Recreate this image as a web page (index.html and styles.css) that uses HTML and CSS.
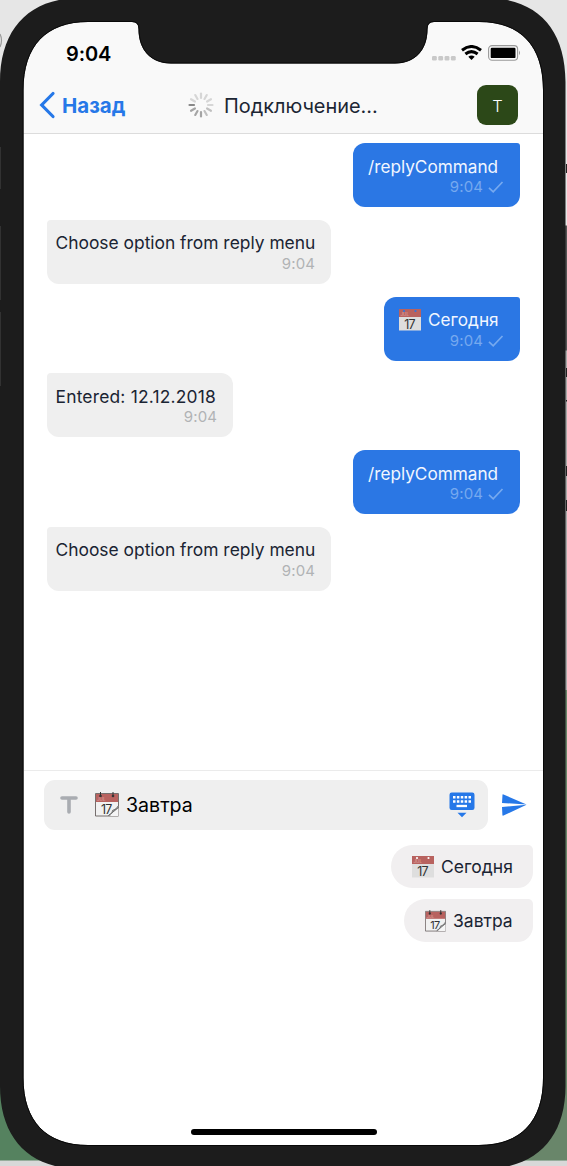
FILE: index.html
```html
<!DOCTYPE html>
<html lang="ru">
<head>
<meta charset="utf-8">
<title>Чат</title>
<link rel="stylesheet" href="styles.css">
</head>
<body>
<div class="screen">
  <div class="top">
    <div class="status">
      <span class="clock">9:04</span>
      <span class="indicators">
        <svg width="24" height="5" viewBox="0 0 24 5" fill="#c9c9c9"><rect width="4.800" height="4.500" rx="1.200"/><rect x="6.300" width="4.800" height="4.500" rx="1.200"/><rect x="12.600" width="4.800" height="4.500" rx="1.200"/><rect x="18.900" width="4.800" height="4.500" rx="1.200"/></svg>
        <svg class="wifi" width="21" height="15" viewBox="0 0 21 15" fill="none" stroke="#000" stroke-width="3"><path d="M1 5.200Q10.500-2.200 20 5.200M4.400 9Q10.500 4.200 16.600 9"/><path d="M7.300 11.800q3.200-2.500 6.400 0L10.500 15z" fill="#000" stroke="none"/></svg>
        <svg width="33" height="16" viewBox="0 0 33 16"><rect x=".6" y=".6" width="29" height="14.600" rx="3.500" fill="none" stroke="#999" stroke-width="1.100"/><rect x="2.700" y="2.700" width="24.800" height="10.400" rx="1.200"/><path d="M31 5.500q2 2.300 0 4.800z" fill="#999"/></svg>
      </span>
    </div>
    <div class="nav">
      <a class="back"><svg width="17" height="28" viewBox="0 0 17 28"><path d="M14 2.500L2.700 14L14 25.500" fill="none" stroke="#2678e8" stroke-width="3.200" stroke-linecap="round" stroke-linejoin="miter"/></svg><span>Назад</span></a>
      <div class="title">
        <svg width="26" height="26" viewBox="-13 -13 26 26" stroke-width="2.200" stroke-linecap="round">
          <g stroke="#d6d6d6"><path d="M0-7v-4.500"/><path d="M0-7v-4.500" transform="rotate(30)"/><path d="M0-7v-4.500" transform="rotate(60)"/><path d="M0-7v-4.500" transform="rotate(90)"/><path d="M0-7v-4.500" transform="rotate(300)"/><path d="M0-7v-4.500" transform="rotate(330)"/></g>
          <g stroke="#c0c0c0"><path d="M0-7v-4.500" transform="rotate(120)"/><path d="M0-7v-4.500" transform="rotate(150)"/></g>
          <g stroke="#a5a5a5"><path d="M0-7v-4.500" transform="rotate(180)"/><path d="M0-7v-4.500" transform="rotate(210)"/><path d="M0-7v-4.500" transform="rotate(240)"/></g>
          <path d="M0-7v-4.500" transform="rotate(270)" stroke="#888"/>
        </svg>
        <span>Подключение...</span>
      </div>
      <div class="avatar">T</div>
    </div>
  </div>

  <div class="chat">
    <div class="msg out"><p>/replyCommand</p><small>9:04<svg width="16" height="12" viewBox="0 0 16 12"><path class="check" d="M1 6.800L5.200 10.800L14.500 1"/></svg></small></div>
    <div class="msg in"><p>Choose option from reply menu</p><small>9:04</small></div>
    <div class="msg out today"><p><svg class="cal" width="22" height="22" viewBox="0 0 22 22">
      <path fill="#dedede" d="M0 7h22v14.500H0z"/><path fill="#b8625f" d="M0 0h22v8H0z"/>
      <circle cx="5" cy="2" r="1.100" fill="currentColor"/><circle cx="16.500" cy="2" r="1.100" fill="currentColor"/>
      <text x="1.500" y="6.800" font-size="4.500" fill="#e0aaa7">JUL</text>
      <text class="day" x="10.600" y="19.500" font-size="12.500">17</text>
    </svg><span>Сегодня</span></p><small>9:04<svg width="16" height="12" viewBox="0 0 16 12"><path class="check" d="M1 6.800L5.200 10.800L14.500 1"/></svg></small></div>
    <div class="msg in entered"><p>Entered: 12.12.2018</p><small>9:04</small></div>
    <div class="msg out"><p>/replyCommand</p><small>9:04<svg width="16" height="12" viewBox="0 0 16 12"><path class="check" d="M1 6.800L5.200 10.800L14.500 1"/></svg></small></div>
    <div class="msg in"><p>Choose option from reply menu</p><small>9:04</small></div>
  </div>

  <div class="composer">
    <div class="field">
      <svg width="18" height="20" viewBox="0 0 18 20"><path d="M2 3h14M9 3v14" stroke="#a9acb1" stroke-width="3.600" stroke-linecap="round"/></svg>
      <svg class="draft-icon" width="24" height="25" viewBox="0 0 24 25">
        <path fill="#f1f1f1" stroke="#68605f" stroke-width=".9" d="M.5 1.500h23V24H.5z"/><path fill="#b8625f" d="M1 2h22v8H1z"/>
        <path d="M5.500 0v4M18 0v4" stroke="#333" stroke-width="1"/><circle cx="5.500" cy="4" r="1.300" fill="#333"/><circle cx="18" cy="4" r="1.300" fill="#333"/>
        <text x="2" y="9" font-size="4.500" fill="#e0aaa7">JUL</text>
        <text class="day" x="11.300" y="21.500" font-size="12.500">17</text>
        <path fill="#f5f5f5" d="M15 24l8.500-8v8z"/><path fill="#aaa" d="M23.500 13q-2 4.500-6 5 .5 3-3.500 5.500l9.500-7.500z"/><path d="M23.500 13.500q-2 4-6 5 .5 3-4 5l10-8" fill="none" stroke="#555" stroke-width=".7"/>
      </svg>
      <span class="draft">Завтра</span>
      <svg class="keyboard" width="26" height="26" viewBox="0 0 26 26"><rect x=".5" y=".5" width="25" height="17.500" rx="2.200" fill="#2678e8"/><path d="M4 5.200h18M4 9.500h18" stroke="#fff" stroke-width="2.500" stroke-dasharray="2.500 1.375"/><path d="M7.500 14h10.500" stroke="#fff" stroke-width="2.300"/><path d="M8.500 20.700h9L13 25.300z" fill="#2678e8"/></svg>
    </div>
    <svg class="send" width="25" height="22" viewBox="0 0 25 22" fill="#2678e8"><path d="M.5.8Q.5 0 1.500.4L24.500 10.500 0 9zM0 13L24.500 10.700 1.500 21.600Q.4 22 .4 21z"/></svg>
  </div>

  <div class="replies">
    <div class="reply first"><svg class="cal" width="22" height="22" viewBox="0 0 22 22">
      <path fill="#dedede" d="M0 7h22v14.500H0z"/><path fill="#b8625f" d="M0 0h22v8H0z"/>
      <circle cx="5" cy="2" r="1.100" fill="currentColor"/><circle cx="16.500" cy="2" r="1.100" fill="currentColor"/>
      <text x="1.500" y="6.800" font-size="4.500" fill="#e0aaa7">JUL</text>
      <text class="day" x="10.600" y="19.500" font-size="12.500">17</text>
    </svg><span>Сегодня</span></div>
    <div class="reply"><svg width="21" height="22" viewBox="0 0 24 25">
      <path fill="#f1f1f1" stroke="#68605f" stroke-width=".9" d="M.5 1.500h23V24H.5z"/><path fill="#b8625f" d="M1 2h22v8H1z"/>
      <path d="M5.500 0v4M18 0v4" stroke="#333" stroke-width="1"/><circle cx="5.500" cy="4" r="1.300" fill="#333"/><circle cx="18" cy="4" r="1.300" fill="#333"/>
      <text x="2" y="9" font-size="4.500" fill="#e0aaa7">JUL</text>
      <text class="day" x="11.300" y="21.500" font-size="12.500">17</text>
      <path fill="#f5f5f5" d="M15 24l8.500-8v8z"/><path fill="#aaa" d="M23.500 13q-2 4.500-6 5 .5 3-3.500 5.500l9.500-7.500z"/><path d="M23.500 13.500q-2 4-6 5 .5 3-4 5l10-8" fill="none" stroke="#555" stroke-width=".7"/>
    </svg><span>Завтра</span></div>
  </div>
  <div class="home"></div>
</div>

<svg class="frame" width="567" height="1166" viewBox="0 0 567 1166" aria-hidden="true">
  <path d="M0 34q3 6 0 13" fill="none" stroke="#999" stroke-width="1.200"/>
  <path d="M566.500 164v9M566.500 368v9M566.500 400v1.500M566.500 466v10M566.500 500v11" stroke="#222"/>
  <path fill="#1c1c1c" fill-rule="evenodd" d="M0 82C0 29 29-2 80-2H486C537-2 565.500 29 565.500 82V1086C565.500 1138 536 1169 483 1169H81C29 1169 0 1138 0 1086Z
  M23.500 90V1078C23.500 1121 46 1145 88 1145H479C521 1145 543 1121 543 1078V90C543 46 521 22 479 22H434Q427.500 22 427.500 29C427.500 50 415 63.500 395 63.500H171C151 63.500 138.500 50 138.500 29Q138.500 22 132 22H88C46 22 23.500 46 23.500 90Z"/>
  <path fill="none" stroke="#080808" d="M23 90V1078C23 1121 46 1145.500 88 1145.500H479C521 1145.500 543.500 1121 543.500 1078V90C543.500 46 521 21.500 479 21.500H434Q427 21.500 427 29C427 50 415 63 395 63H171C151 63 139 50 139 29Q139 21.500 132 21.500H88C46 21.500 23 46 23 90Z"/>
  <path d="M.5 147v42M.5 226v74M.5 312v74" stroke="#323232"/>
</svg>
</body>
</html>
```
FILE: styles.css
```css
* { box-sizing: border-box; }
body {
  margin: 0;
  width: 567px;
  height: 1166px;
  overflow: hidden;
  position: relative;
  padding: 22px 24px 21px 23px;
  font-family: Inter, "Liberation Sans", sans-serif;
  background:
    linear-gradient(#0000 0 1160px, #d8d8d8 1161px),
    linear-gradient(90deg, #0000 300px, #69866a 301px) 0 690px / 100% 470px no-repeat,
    linear-gradient(#0000 1000px, #55825f 1001px 1160px),
    linear-gradient(#e6e6e6 0 225px, #555 226px 350px, #aaa 351px 690px, #aaa);
}
.frame { position: absolute; top: 0; left: 0; }
.screen { height: 1123px; background: #fff; display: flex; flex-direction: column; padding-left: 1px; }
.top { height: 112px; margin-left: -1px; padding-left: 1px; background: #f9f9f9; border-bottom: 1.500px solid #dcdcdc; flex: none; }
.status { height: 63px; display: flex; justify-content: space-between; padding: 0 22px 0 42px; }
.clock { font-size: 20px; font-weight: 600; line-height: 24px; padding-top: 20px; letter-spacing: -.1px; }
.indicators { display: flex; align-items: flex-start; padding-top: 23px; }
.indicators svg:first-child { margin-top: 11px; }
.wifi { margin: 0 6px 0 5px; }
.nav { height: 40px; display: flex; align-items: center; padding: 0 25px 0 15px; }
.back { display: flex; align-items: center; width: 149px; gap: 6px; color: #2678e8; font-size: 20.500px; font-weight: 700; }
.title { display: flex; align-items: center; gap: 10px; color: #1c2634; font-size: 19.900px; flex: 1; white-space: nowrap; }
.title span { padding-top: 1px; }
.avatar { width: 41px; height: 40px; border-radius: 9px; background: #2c4818; color: #fff; display: grid; place-items: center; font-size: 16.500px; font-weight: 300; padding-top: 1px; }

.chat { height: 636px; flex: none; padding: 9px 23px 0; display: flex; flex-direction: column; align-items: flex-start; gap: 12.800px; }
.msg { height: 64px; font-size: 17.400px; white-space: nowrap; padding-top: 12px; display: flex; flex-direction: column; }
.msg p { margin: 0; height: 23px; line-height: 24px; display: flex; align-items: center; }
.msg small { font-size: 15px; line-height: 18px; display: flex; align-items: center; justify-content: flex-end; letter-spacing: .1px; }
.in { width: 284px; background: #efefef; color: #1a2433; border-radius: 4px 12px 12px 12px; padding-left: 8.500px; padding-right: 16px; }
.in small { color: #b1b3b5; }
.entered { width: 186px; }
.entered p { letter-spacing: .2px; }
.out { align-self: flex-end; width: 167px; background: #2b77e4; color: #f1f6ff; border-radius: 12px 3px 12px 12px; padding-left: 15px; padding-right: 16px; }
.out p { font-size: 17.200px; }
.out small { color: #76a9ef; gap: 5px; }
.today { width: 136px; }
.today p { gap: 7px; }
.today .cal { color: #2b77e4; }
.cal { color: #fff; flex: none; }
.check { fill: none; stroke: currentColor; stroke-width: 1.700; }
.day { text-anchor: middle; fill: #333; letter-spacing: -.7px; }

.composer { height: 61px; flex: none; border-top: 1.500px solid #ebebeb; display: flex; align-items: flex-start; padding: 9px 0 0 20px; }
.field { width: 444px; height: 50px; background: #efefef; border-radius: 11px; display: flex; align-items: center; padding: 0 13px 1px 16px; }
.draft-icon { margin: 0 7px 0 17px; }
.draft { font-size: 19.600px; flex: 1; }
.send { margin: 14px 0 0 14px; }
.replies { display: flex; flex-direction: column; align-items: flex-end; gap: 11px; padding: 14px 10px 0 0; flex: 1; }
.reply { height: 43px; width: 129px; background: #f1eff0; border-radius: 22px 5px 16px 22px; display: flex; align-items: center; padding-left: 21px; gap: 7px; font-size: 17.500px; color: #1a2433; }
.first { width: 142px; }
.home { width: 186px; height: 6px; border-radius: 3px; background: #000; align-self: center; margin: 0 0 10px; }
```
